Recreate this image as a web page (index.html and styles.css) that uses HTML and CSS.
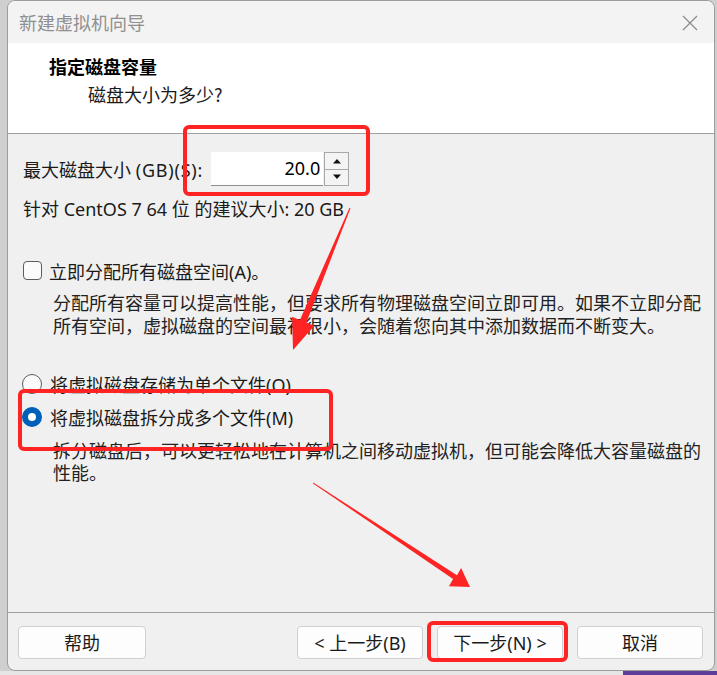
FILE: index.html
```html
<!DOCTYPE html>
<html lang="zh-CN">
<head>
<meta charset="utf-8">
<title>新建虚拟机向导</title>
<link rel="stylesheet" href="styles.css">
</head>
<body>
<div class="desktop">
  <div class="dialog">
    <div class="titlebar">
      <span class="title">新建虚拟机向导</span>
      <svg class="close" width="16" height="16" viewBox="0 0 16 16"><path d="M1 1 L15 15 M15 1 L1 15"/></svg>
    </div>
    <div class="header">
      <div class="h-title">指定磁盘容量</div>
      <div class="h-sub">磁盘大小为多少?</div>
    </div>
    <div class="content">
      <div class="size-row">
        <span class="lbl">最大磁盘大小 <span class="wide">(GB)(S):</span></span>
        <div class="spin">
          <div class="spin-input">20.0</div>
          <div class="spin-btns">
            <div class="spin-btn"><svg width="10" height="6" viewBox="0 0 10 6"><path d="M1 5.5 L5 1 L9 5.5 Z"/></svg></div>
            <div class="spin-btn"><svg width="10" height="6" viewBox="0 0 10 6"><path d="M1 0.5 L9 0.5 L5 5 Z"/></svg></div>
          </div>
        </div>
      </div>
      <div class="rec">针对 CentOS 7 64 位 的建议大小: 20 GB</div>
      <div class="check-row"><span class="checkbox"></span><span class="lbl">立即分配所有磁盘空间(A)。</span></div>
      <div class="desc">分配所有容量可以提高性能，但要求所有物理磁盘空间立即可用。如果不立即分配<br>所有空间，虚拟磁盘的空间最初很小，会随着您向其中添加数据而不断变大。</div>
      <div class="radio-row first"><span class="radio"></span><span class="lbl">将虚拟磁盘存储为单个文件(O)</span></div>
      <div class="radio-row second"><span class="radio on"></span><span class="lbl">将虚拟磁盘拆分成多个文件(M)</span></div>
      <div class="desc desc2">拆分磁盘后，可以更轻松地在计算机之间移动虚拟机，但可能会降低大容量磁盘的<br>性能。</div>
    </div>
    <div class="footer">
      <button class="btn">帮助</button>
      <span class="spacer"></span>
      <button class="btn">&lt; 上一步(B)</button>
      <button class="btn">下一步(N) &gt;</button>
      <button class="btn">取消</button>
    </div>
  </div>
</div>
<svg class="annot" width="717" height="675" viewBox="0 0 717 675">
  <g fill="none" stroke="#ff2424" stroke-width="4">
    <rect x="185" y="127" width="183" height="67" rx="4"/>
    <rect x="20" y="391" width="311" height="58" rx="4"/>
    <rect x="429" y="623" width="137" height="37" rx="4"/>
  </g>
  <g fill="#ff2424">
    <polygon points="350.5,208.2 306.4,322.5 314.3,325.7 293,350 292.1,316.7 299.9,319.9 349.5,207.8"/>
    <polygon points="313,483.4 453.1,578.9 448.9,586.3 470,587 461.1,567.9 457.0,575.3 313.2,482.6"/>
  </g>
</svg>
</body>
</html>
```

FILE: styles.css
```css
html, body {
  margin: 0;
  padding: 0;
}
body {
  width: 717px;
  height: 675px;
  overflow: hidden;
  position: relative;
  background: #cfcfcf;
  font-family: "Noto Sans", "Noto Sans CJK SC", sans-serif;
  color: #1a1a1a;
}
.desktop {
  height: 675px;
  padding-left: 7px;
  box-sizing: border-box;
  background:
    linear-gradient(to right, #e6e6e6 0 623px, #5e3d98 623px) left bottom / 100% 4px no-repeat,
    #cfcfcf;
}
.dialog {
  width: 708px;
  height: 671px;
  box-sizing: border-box;
  border: 1px solid #9c9c9c;
  border-radius: 8px;
  background: #f0f0f0;
  display: flex;
  flex-direction: column;
  overflow: hidden;
}
.titlebar {
  height: 42px;
  flex: none;
  background: #f3f3f3;
  display: flex;
  align-items: center;
  justify-content: space-between;
  padding: 0 10px 0 11px;
}
.title {
  font-family: "Noto Sans CJK SC", sans-serif;
  font-size: 18px;
  color: #8f8f8f;
}
.close {
  margin-top: 1px;
  margin-right: 6px;
}
.close path {
  stroke: #8a8a8a;
  stroke-width: 1.2;
  fill: none;
}
.header {
  height: 91px;
  flex: none;
  box-sizing: border-box;
  background: #ffffff;
  border-bottom: 1px solid #a0a0a0;
  padding: 11px 0 0 41px;
  font-family: "Noto Sans CJK SC", sans-serif;
}
.h-title {
  font-size: 18px;
  font-weight: 700;
  line-height: 24px;
  color: #000;
}
.h-sub {
  font-size: 18px;
  line-height: 24px;
  margin-top: 4px;
  padding-left: 39px;
  color: #1a1a1a;
}
.content {
  flex: 1;
  padding: 18px 0 0 15px;
  font-size: 18px;
}
.lbl {
  white-space: nowrap;
}
.wide {
  letter-spacing: 0.8px;
}
.size-row {
  display: flex;
  align-items: center;
  height: 34px;
  gap: 8px;
}
.spin {
  display: flex;
  height: 34px;
  gap: 1px;
}
.spin-input {
  width: 112px;
  box-sizing: border-box;
  height: 34px;
  background: #fff;
  border-bottom: 1px solid #8f8f8f;
  text-align: right;
  padding-right: 3px;
  line-height: 33px;
  font-size: 18px;
  color: #000;
}
.spin-btns {
  width: 25px;
  box-sizing: border-box;
  border: 1px solid #a8a8a8;
  display: flex;
  flex-direction: column;
  background: #f4f4f4;
}
.spin-btn {
  flex: 1;
  display: flex;
  align-items: center;
  justify-content: center;
}
.spin-btn + .spin-btn {
  border-top: 1px solid #a8a8a8;
}
.spin-btn path {
  fill: #111;
}
.rec {
  margin-top: 12px;
  line-height: 23px;
  white-space: nowrap;
}
.check-row, .radio-row {
  display: flex;
  align-items: center;
  height: 23px;
  gap: 7px;
}
.check-row {
  margin-top: 38px;
}
.checkbox {
  width: 19px;
  height: 19px;
  box-sizing: border-box;
  border: 1px solid #5c5c5c;
  border-radius: 4px;
  background: #fbfbfb;
}
.desc {
  margin-top: 9px;
  padding-left: 30px;
  font-family: "Noto Sans CJK SC", sans-serif;
  font-size: 18px;
  line-height: 23px;
  white-space: nowrap;
  color: #222;
}
.radio-row.first {
  margin-top: 35px;
}
.radio-row.second {
  margin-top: 10px;
}
.radio {
  width: 20px;
  height: 20px;
  box-sizing: border-box;
  border: 1px solid #5c5c5c;
  border-radius: 50%;
  background: #fbfbfb;
  margin-left: -1px;
  margin-right: 1px;
}
.radio.on {
  border: 6px solid #005fb8;
  background: #fff;
}
.desc2 {
  margin-top: 11px;
  line-height: 22px;
}
.footer {
  flex: none;
  height: 58px;
  box-sizing: border-box;
  border-top: 1px solid #a0a0a0;
  display: flex;
  align-items: flex-start;
  padding: 13px 11px 0 10px;
  gap: 14px;
}
.spacer {
  flex: 1;
}
.btn {
  width: 126px;
  height: 33px;
  box-sizing: border-box;
  background: #fdfdfd;
  border: 1px solid #cfcfcf;
  border-radius: 4px;
  font-family: "Noto Sans", "Noto Sans CJK SC", sans-serif;
  font-size: 18px;
  color: #1a1a1a;
  padding: 0;
  line-height: 30px;
}
.btn:first-child {
  width: 128px;
}
.annot {
  position: absolute;
  left: 0;
  top: 0;
  pointer-events: none;
}
```
